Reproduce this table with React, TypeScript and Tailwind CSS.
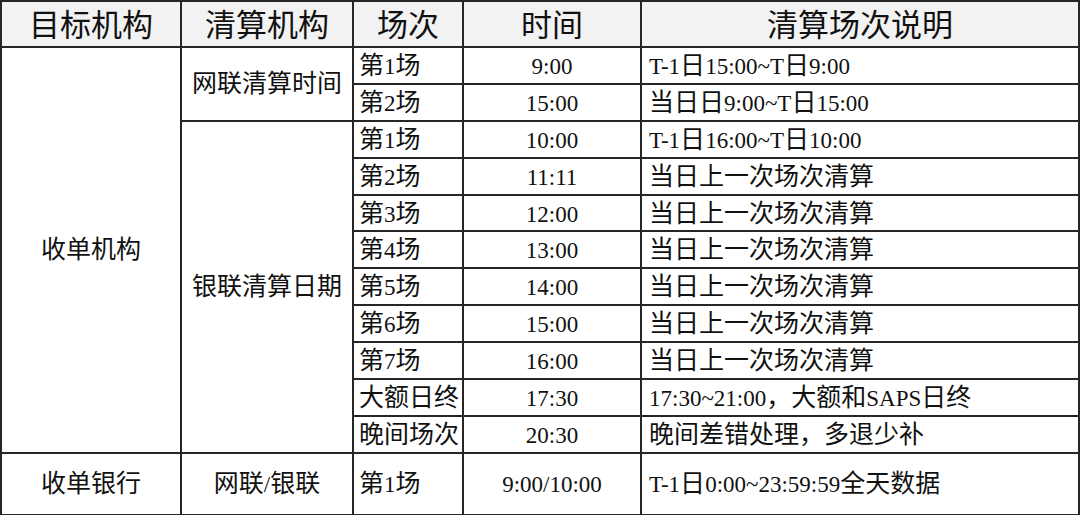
const font = { fontFamily: '"Liberation Serif", "Noto Sans CJK SC", serif' }

interface Row {
  seq: string
  time: string
  note: string
}

const wanglian: Row[] = [
  { seq: "第1场", time: "9:00", note: "T-1日15:00~T日9:00" },
  { seq: "第2场", time: "15:00", note: "当日日9:00~T日15:00" },
]

const yinlian: Row[] = [
  { seq: "第1场", time: "10:00", note: "T-1日16:00~T日10:00" },
  { seq: "第2场", time: "11:11", note: "当日上一次场次清算" },
  { seq: "第3场", time: "12:00", note: "当日上一次场次清算" },
  { seq: "第4场", time: "13:00", note: "当日上一次场次清算" },
  { seq: "第5场", time: "14:00", note: "当日上一次场次清算" },
  { seq: "第6场", time: "15:00", note: "当日上一次场次清算" },
  { seq: "第7场", time: "16:00", note: "当日上一次场次清算" },
  { seq: "大额日终", time: "17:30", note: "17:30~21:00，大额和SAPS日终" },
  { seq: "晚间场次", time: "20:30", note: "晚间差错处理，多退少补" },
]

const cell = "border-2 border-[#262626] p-0"

// latin runs are set a little smaller than the CJK glyphs, like the source sheet
function Mixed({ text }: { text: string }) {
  const parts = text.split(/([\x20-\x7E]+)/)
  return (
    <>
      {parts.map((p, i) =>
        /^[\x20-\x7E]+$/.test(p) ? (
          <span key={i} className="text-[23px]">
            {p}
          </span>
        ) : (
          p
        )
      )}
    </>
  )
}

function RowCells({ row }: { row: Row }) {
  return (
    <>
      <td className={`${cell} pl-[5px] text-left whitespace-nowrap`}>
        <Mixed text={row.seq} />
      </td>
      <td className={`${cell} text-center`}>
        <Mixed text={row.time} />
      </td>
      <td className={`${cell} pl-[7px] text-left whitespace-nowrap`}>
        <Mixed text={row.note} />
      </td>
    </>
  )
}

export default function App() {
  const total = wanglian.length + yinlian.length

  return (
    <div className="w-[1080px] h-[515px] bg-white overflow-hidden" style={font}>
      <table className="w-[1080px] table-fixed border-collapse text-[25px] leading-none text-[#111]">
        <colgroup>
          <col className="w-[180px]" />
          <col className="w-[172px]" />
          <col className="w-[110px]" />
          <col className="w-[178px]" />
          <col />
        </colgroup>
        <thead>
          <tr className="h-[46px] bg-[#f2f2f2] text-[31px]">
            <th className={`${cell} font-normal pt-[3px]`}>目标机构</th>
            <th className={`${cell} font-normal pt-[3px]`}>清算机构</th>
            <th className={`${cell} font-normal pt-[3px]`}>场次</th>
            <th className={`${cell} font-normal pt-[3px]`}>时间</th>
            <th className={`${cell} font-normal pt-[3px]`}>清算场次说明</th>
          </tr>
        </thead>
        <tbody>
          {wanglian.map((row, idx) => (
            <tr key={`w${idx}`} className="h-[36.9px]">
              {idx === 0 && (
                <td rowSpan={total} className={`${cell} text-center`}>
                  收单机构
                </td>
              )}
              {idx === 0 && (
                <td rowSpan={wanglian.length} className={`${cell} text-center whitespace-nowrap`}>
                  网联清算时间
                </td>
              )}
              <RowCells row={row} />
            </tr>
          ))}
          {yinlian.map((row, idx) => (
            <tr key={`y${idx}`} className="h-[36.9px]">
              {idx === 0 && (
                <td rowSpan={yinlian.length} className={`${cell} text-center whitespace-nowrap`}>
                  银联清算日期
                </td>
              )}
              <RowCells row={row} />
            </tr>
          ))}
          <tr className="h-[62px]">
            <td className={`${cell} text-center`}>收单银行</td>
            <td className={`${cell} text-center`}>
              <Mixed text="网联/银联" />
            </td>
            <RowCells row={{ seq: "第1场", time: "9:00/10:00", note: "T-1日0:00~23:59:59全天数据" }} />
          </tr>
        </tbody>
      </table>
    </div>
  )
}
